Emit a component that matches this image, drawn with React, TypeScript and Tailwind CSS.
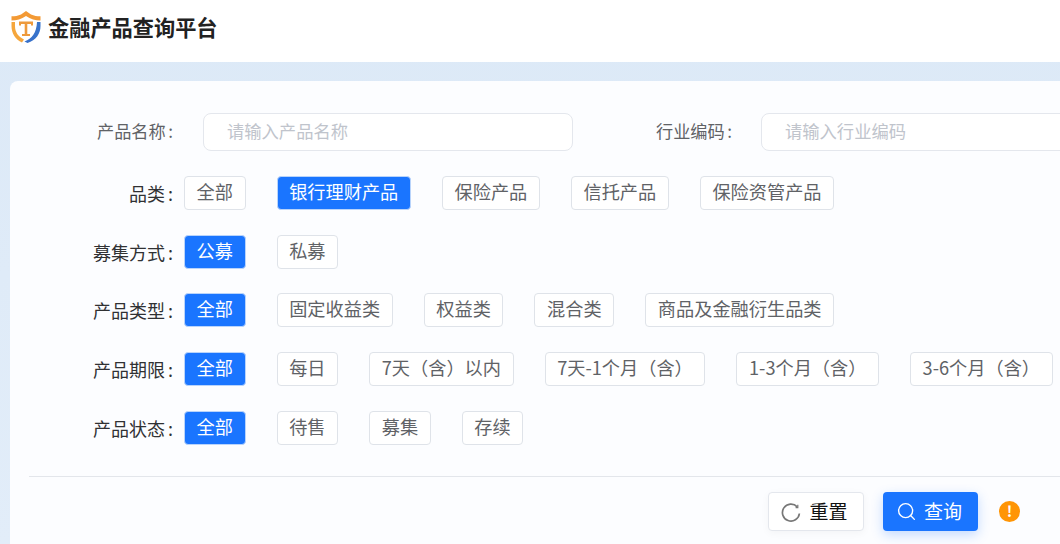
import React from 'react';
import { Search } from 'lucide-react';

const FONT = '[font-family:"Noto_Sans_CJK_SC","Liberation_Sans",sans-serif]';

const ROWS: { label: string; tags: string[]; active: number; mb: string }[] = [
  { label: '品类', tags: ['全部', '银行理财产品', '保险产品', '信托产品', '保险资管产品'], active: 1, mb: 'mb-[25px]' },
  { label: '募集方式', tags: ['公募', '私募'], active: 0, mb: 'mb-[24px]' },
  { label: '产品类型', tags: ['全部', '固定收益类', '权益类', '混合类', '商品及金融衍生品类'], active: 0, mb: 'mb-[25px]' },
  { label: '产品期限', tags: ['全部', '每日', '7天（含）以内', '7天-1个月（含）', '1-3个月（含）', '3-6个月（含）'], active: 0, mb: 'mb-[25px]' },
  { label: '产品状态', tags: ['全部', '待售', '募集', '存续'], active: 0, mb: 'mb-0' },
];

const Logo = () => (
  <svg width="30" height="32" viewBox="0 0 30 32" fill="none">
    <defs>
      <linearGradient id="leftSide" x1="0" y1="8" x2="10" y2="31">
        <stop offset="0" stopColor="#f5a63c" />
        <stop offset="1" stopColor="#ea5f2a" />
      </linearGradient>
      <linearGradient id="rightSide" x1="28" y1="12" x2="14" y2="31">
        <stop offset="0" stopColor="#3f8fe0" />
        <stop offset="1" stopColor="#27309a" />
      </linearGradient>
    </defs>
    <path d="M15 0 L20 3.500 C23 4.800 26 5.300 29.500 5.300 L29.500 9.500 C24.500 9.500 19.500 8 15 5 C10.500 8 5.500 9.500 0.500 9.500 L0.500 5.300 C4 5.300 7 4.800 10 3.500 Z" fill="#f39a35" />
    <path d="M0.500 11 L4 11 L4 15 C4 21 7 25.500 13 28.500 L11 31.500 C4.500 28.500 0.500 22.500 0.500 15 Z" fill="url(#leftSide)" />
    <path d="M29.500 11 L29.500 15 C29.500 23 25 29 16.500 32 L13.500 30.500 C21 27.500 25.500 22 26 11 Z" fill="url(#rightSide)" />
    <path d="M8 10.500 H22 V14.500 H20 V13 H16.300 V23 H19 V25 H11 V23 H13.700 V13 H10 V14.500 H8 Z" fill="#ee9a3c" />
  </svg>
);

// circular arrow with a thin open arc, lucide's one has too big a head
const ResetIcon = () => (
  <svg width="20" height="20" viewBox="0 0 20 20" fill="none" stroke="#777" strokeWidth="1.700">
    <path d="M16.200 4.800 A8.500 8.500 0 1 0 18.400 11.500" />
    <path d="M16.800 2.800 V5.600 H14.600" strokeWidth="1.200" />
  </svg>
);

const Tag = ({ text, active }: { text: string; active: boolean }) => (
  <div
    className={`h-[34px] px-[11.6px] pb-[2px] flex items-center shrink-0 rounded-[4px] border text-[18.2px] whitespace-nowrap ${
      active ? 'bg-[#1a75ff] border-[#b9d4fb] text-white' : 'bg-white border-[#dfe3e9] text-[#606266]'
    }`}
  >
    {text}
  </div>
);

const Field = ({ label, placeholder, labelW, inputW, gap }: { label: string; placeholder: string; labelW: string; inputW: string; gap: string }) => (
  <div className="flex items-center shrink-0">
    <div className={`${labelW} pb-[3px] pr-[1px] flex justify-end text-[17.2px] text-[#606266] whitespace-nowrap`}>
      {label}
      <span className="ml-[2.5px]">:</span>
    </div>
    <div className={`${inputW} ${gap} h-[38px] pl-[23px] pb-[2px] flex items-center rounded-[8px] border border-[#e4e7ed] bg-white text-[17.3px] text-[#c0c4cc]`}>
      {placeholder}
    </div>
  </div>
);

export default function App() {
  return (
    <div className={`w-[1060px] h-[544px] overflow-hidden bg-gradient-to-b from-[#dce9f7] to-[#e2edf9] ${FONT}`}>
      <header className="h-[62px] bg-white flex items-center pl-[11px] pb-[8px]">
        <Logo />
        <div className="ml-[7px] text-[21.2px] font-bold text-[#222]">金融产品查询平台</div>
      </header>

      <main className="ml-[10px] mt-[19px] w-[1080px] h-[480px] bg-[#fcfdff] rounded-tl-[8px] pt-[32px]">
        <div className="flex items-center">
          <Field label="产品名称" placeholder="请输入产品名称" labelW="w-[164px]" inputW="w-[370px]" gap="ml-[29px]" />
          <Field label="行业编码" placeholder="请输入行业编码" labelW="w-[160px]" inputW="w-[330px]" gap="ml-[28px]" />
        </div>

        <div className="mt-[25px]">
          {ROWS.map(row => (
            <div key={row.label} className={`flex items-center ${row.mb}`}>
              <div className="w-[164px] pr-[1px] pt-[1px] flex justify-end text-[18px] text-[#303133] whitespace-nowrap">
                {row.label}
                <span className="ml-[3px]">:</span>
              </div>
              <div className="ml-[10px] flex items-center gap-[31px]">
                {row.tags.map(t => (
                  <Tag key={t} text={t} active={row.tags[row.active] === t} />
                ))}
              </div>
            </div>
          ))}
        </div>

        <div className="ml-[19px] mt-[31px] h-px bg-[#e3e6eb]" />

        <div className="mt-[15px] pl-[758px] flex items-center">
          <button className="w-[96px] h-[39px] pr-[3px] flex items-center justify-center gap-[8px] rounded-[4px] border border-[#e4e7ed] bg-white text-[19px] text-[#111] shadow-[0_2px_8px_rgba(0,0,0,0.04)]">
            <ResetIcon />
            重置
          </button>
          <button className="ml-[19px] w-[95px] h-[39px] pr-[3px] flex items-center justify-center gap-[7px] rounded-[4px] bg-[#1a75ff] text-[19px] text-white shadow-[0_4px_12px_rgba(26,117,255,0.25)]">
            <Search size={21} strokeWidth={1.6} />
            查询
          </button>
          <div className="ml-[21px] w-[21px] h-[21px] rounded-full bg-[#ff9505] text-white flex items-center justify-center text-[15px] font-bold">!</div>
        </div>
      </main>
    </div>
  );
}
